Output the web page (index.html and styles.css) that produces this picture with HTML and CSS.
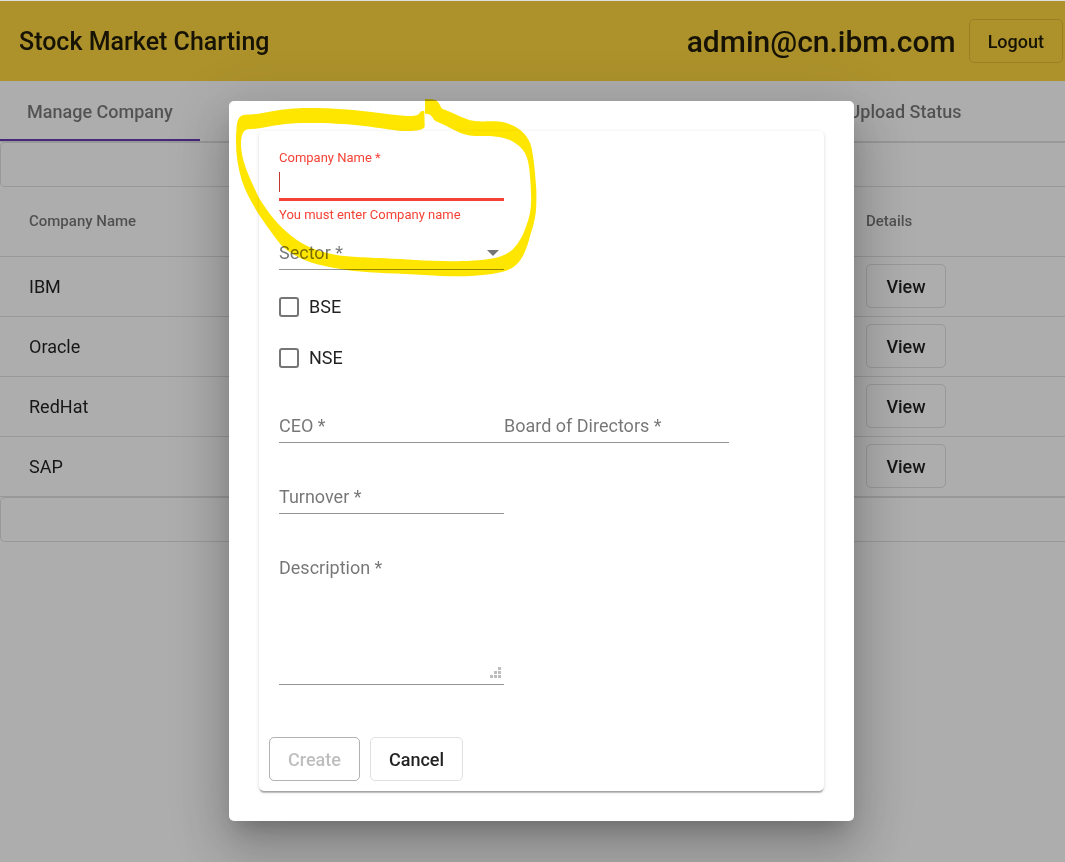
FILE: index.html
```html
<!DOCTYPE html>
<html lang="en">
<head>
<meta charset="utf-8">
<title>Stock Market Charting</title>
<meta name="viewport" content="width=device-width, initial-scale=1">
<link rel="stylesheet" href="styles.css">
</head>
<body>
<div class="app">
  <header class="toolbar">
    <h1 class="brand">Stock Market Charting</h1>
    <span class="user">admin@cn.ibm.com</span>
    <button class="btn" type="button">Logout</button>
  </header>
  <nav class="tabs">
    <a class="tab tab-active" href="#company">Manage Company</a>
    <a class="tab tab-last" href="#upload">Upload Status</a>
  </nav>
  <main>
    <div class="strip"></div>
    <table class="companies">
      <thead>
        <tr><th>Company Name</th><th class="details">Details</th></tr>
      </thead>
      <tbody>
        <tr><td>IBM</td><td class="details"><button class="btn" type="button">View</button></td></tr>
        <tr><td>Oracle</td><td class="details"><button class="btn" type="button">View</button></td></tr>
        <tr><td>RedHat</td><td class="details"><button class="btn" type="button">View</button></td></tr>
        <tr><td>SAP</td><td class="details"><button class="btn" type="button">View</button></td></tr>
      </tbody>
    </table>
    <div class="strip"></div>
  </main>
</div>
<div class="backdrop"></div>
<div class="layer">
  <div class="modal" role="dialog" aria-modal="true">
    <form class="card">
      <div class="field">
        <label class="float-label" for="name">Company Name *</label>
        <div class="stack">
          <input class="control control-invalid" id="name" type="text" aria-describedby="name-error">
          <span class="caret"></span>
        </div>
        <p class="error" id="name-error">You must enter Company name</p>
      </div>
      <div class="field stack sector">
        <select class="control" aria-label="Sector">
          <option value="">Sector *</option>
        </select>
        <svg class="arrow" width="12" height="6" viewBox="0 0 12 6"><path d="M0 0h12L6 6z"/></svg>
      </div>
      <div class="checks">
        <label class="check"><input class="box" type="checkbox">BSE</label>
        <label class="check"><input class="box" type="checkbox">NSE</label>
      </div>
      <div class="people">
        <input class="control" type="text" placeholder="CEO *" aria-label="CEO">
        <input class="control" type="text" placeholder="Board of Directors *" aria-label="Board of Directors">
      </div>
      <div class="field turnover">
        <input class="control" type="text" placeholder="Turnover *" aria-label="Turnover">
      </div>
      <div class="field stack description">
        <textarea class="control area" placeholder="Description *" aria-label="Description"></textarea>
        <svg class="grip" width="11" height="11" viewBox="0 0 11 11"><path d="M8 0h3v3h-3zM4 4h3v3h-3zM8 4h3v3h-3zM0 8h3v3h-3zM4 8h3v3h-3zM8 8h3v3h-3z"/></svg>
      </div>
      <div class="actions">
        <button class="btn" type="submit" disabled>Create</button>
        <button class="btn" type="button">Cancel</button>
      </div>
    </form>
    <svg class="marker" width="330" height="200" viewBox="0 0 990 600" aria-hidden="true"><path d="M598 63 L590 63 C582 66 586 78 560 78 C500 78 400 54 250 54 C150 54 130 73 60 74 C40 76 38 90 35 108 C30 170 34 215 50 270 C75 345 130 415 168 465 C215 510 275 528 380 542 C450 550 520 549 600 555 C680 561 740 560 800 552 C865 543 890 525 912 450 C932 385 935 375 934 300 C930 240 927 215 920 175 C910 125 860 95 810 94 C780 93 765 97 735 91 C710 83 675 65 655 58 C643 54 645 27 620 28 L600 27 L600 71 C625 70 622 92 638 96 C675 110 705 137 750 138 C785 138 830 136 860 153 C905 178 912 205 916 270 C921 350 920 370 893 435 C870 480 850 495 805 505 C770 512 720 514 680 514 C600 513 540 508 480 505 C400 501 360 501 320 492 C230 475 160 420 100 320 C75 265 46 210 48 155 C50 130 57 119 70 118 C130 115 155 99 240 99 C370 98 430 110 500 119 C530 125 600 126 599 108 Z"/></svg>
  </div>
</div>
</body>
</html>
```
FILE: styles.css
```css
* { box-sizing: border-box; }

body {
  margin: 0;
  min-height: 100vh;
  position: relative;
  background: #fff;
  color: rgba(0, 0, 0, 0.87);
  font: 400 18px/24px Roboto, "Liberation Sans", sans-serif;
}

.app { border-top: 1px solid #dedede; }

.toolbar {
  display: flex;
  align-items: center;
  height: 80px;
  padding: 0 2px 0 19px;
  background: #ffd740;
}

.brand {
  margin: 0 auto 0 0;
  padding-top: 2px;
  font-size: 25px;
  font-weight: 500;
}

.user {
  margin-right: 13px;
  padding-top: 2px;
  font-size: 30px;
  font-weight: 500;
}

.btn {
  min-width: 80px;
  height: 44px;
  padding: 2px 18px 0;
  border: 1px solid rgba(0, 0, 0, 0.12);
  border-radius: 5px;
  background: transparent;
  color: rgba(0, 0, 0, 0.87);
  font: inherit;
  font-weight: 500;
}

.btn:disabled {
  border-color: rgba(0, 0, 0, 0.3);
  color: rgba(0, 0, 0, 0.26);
}

.tabs {
  display: flex;
  padding-right: 60px;
  border-bottom: 1px solid rgba(0, 0, 0, 0.12);
}

.tab {
  min-width: 200px;
  padding: 19px 27px 15px;
  border-bottom: 2px solid transparent;
  color: rgba(0, 0, 0, 0.52);
  font-weight: 500;
  text-align: center;
  text-decoration: none;
}

.tab-active { border-bottom-color: #673ab7; }
.tab-last { margin-left: auto; }

.strip {
  height: 45px;
  border: 1px solid rgba(0, 0, 0, 0.12);
  border-right: 0;
  border-radius: 5px 0 0 5px;
}

.companies {
  width: 100%;
  border-collapse: separate;
  border-spacing: 0;
  table-layout: fixed;
}

.companies th,
.companies td {
  height: 60px;
  padding: 0 0 0 29px;
  border-bottom: 1px solid rgba(0, 0, 0, 0.12);
  text-align: left;
}

.companies th {
  height: 70px;
  padding-bottom: 2px;
  color: rgba(0, 0, 0, 0.54);
  font-size: 15px;
  font-weight: 500;
}

.companies .details {
  width: 199px;
  padding-bottom: 2px;
  padding-left: 0;
}

.backdrop {
  position: absolute;
  inset: 1px 0 0;
  background: rgba(0, 0, 0, 0.32);
}

.layer {
  position: absolute;
  inset: 0;
  display: flex;
  justify-content: center;
  align-items: flex-start;
  padding: 101px 0 0 18px;
}

.modal {
  position: relative;
  width: 100%;
  max-width: 625px;
  padding: 30px;
  border-radius: 5px;
  background: #fff;
  box-shadow: 0 14px 19px -9px rgba(0, 0, 0, 0.2),
    0 30px 48px 4px rgba(0, 0, 0, 0.14),
    0 11px 58px 10px rgba(0, 0, 0, 0.12);
}

.card {
  padding: 19px 20px 10px;
  border-radius: 5px;
  box-shadow: 0 3px 1px -1px rgba(0, 0, 0, 0.2),
    0 1px 1px rgba(0, 0, 0, 0.14),
    0 1px 4px rgba(0, 0, 0, 0.12);
}

.field { width: 225px; }

.stack { display: grid; }
.stack > * { grid-area: 1 / 1; }

.float-label {
  display: block;
  color: #f44336;
  font-size: 13px;
  line-height: 16px;
}

.control {
  width: 100%;
  height: 33px;
  padding: 0 0 2px;
  border: 0;
  border-bottom: 1px solid rgba(0, 0, 0, 0.42);
  border-radius: 0;
  outline: 0;
  appearance: none;
  background: transparent;
  color: rgba(0, 0, 0, 0.54);
  font: inherit;
}

.control::placeholder { color: rgba(0, 0, 0, 0.54); opacity: 1; }

select.control { padding: 0; }

.control-invalid {
  height: 35px;
  border-bottom: 3px solid #f44336;
}

.caret {
  align-self: start;
  width: 1px;
  height: 20px;
  margin-top: 6px;
  background: #c0392f;
}

.error {
  margin: 5px 0 0;
  color: #f44336;
  font-size: 13px;
  line-height: 18px;
}

.sector { margin-top: 13px; }

.arrow {
  place-self: center end;
  margin: 0 5px 2px 0;
  fill: rgba(0, 0, 0, 0.54);
  pointer-events: none;
}

.checks {
  display: grid;
  gap: 27px;
  justify-items: start;
  margin-top: 25px;
}

.check {
  display: flex;
  align-items: center;
  gap: 10px;
}

.box {
  width: 20px;
  height: 20px;
  margin: 0;
  border: 2px solid rgba(0, 0, 0, 0.54);
  border-radius: 3px;
  appearance: none;
}

.people {
  display: flex;
  width: 100%;
  max-width: 450px;
  margin-top: 40px;
}

.turnover { margin-top: 38px; }
.description { margin-top: 38px; }

.area {
  display: block;
  height: 133px;
  padding-top: 4px;
  resize: none;
}

.grip {
  place-self: end;
  margin: 0 3px 7px 0;
  fill: #bdbdbd;
  pointer-events: none;
}

.actions {
  display: flex;
  gap: 10px;
  margin: 52px 0 0 -10px;
}

.marker {
  position: absolute;
  top: -11px;
  left: -4px;
  fill: #ffe600;
  mix-blend-mode: multiply;
  pointer-events: none;
}
```
